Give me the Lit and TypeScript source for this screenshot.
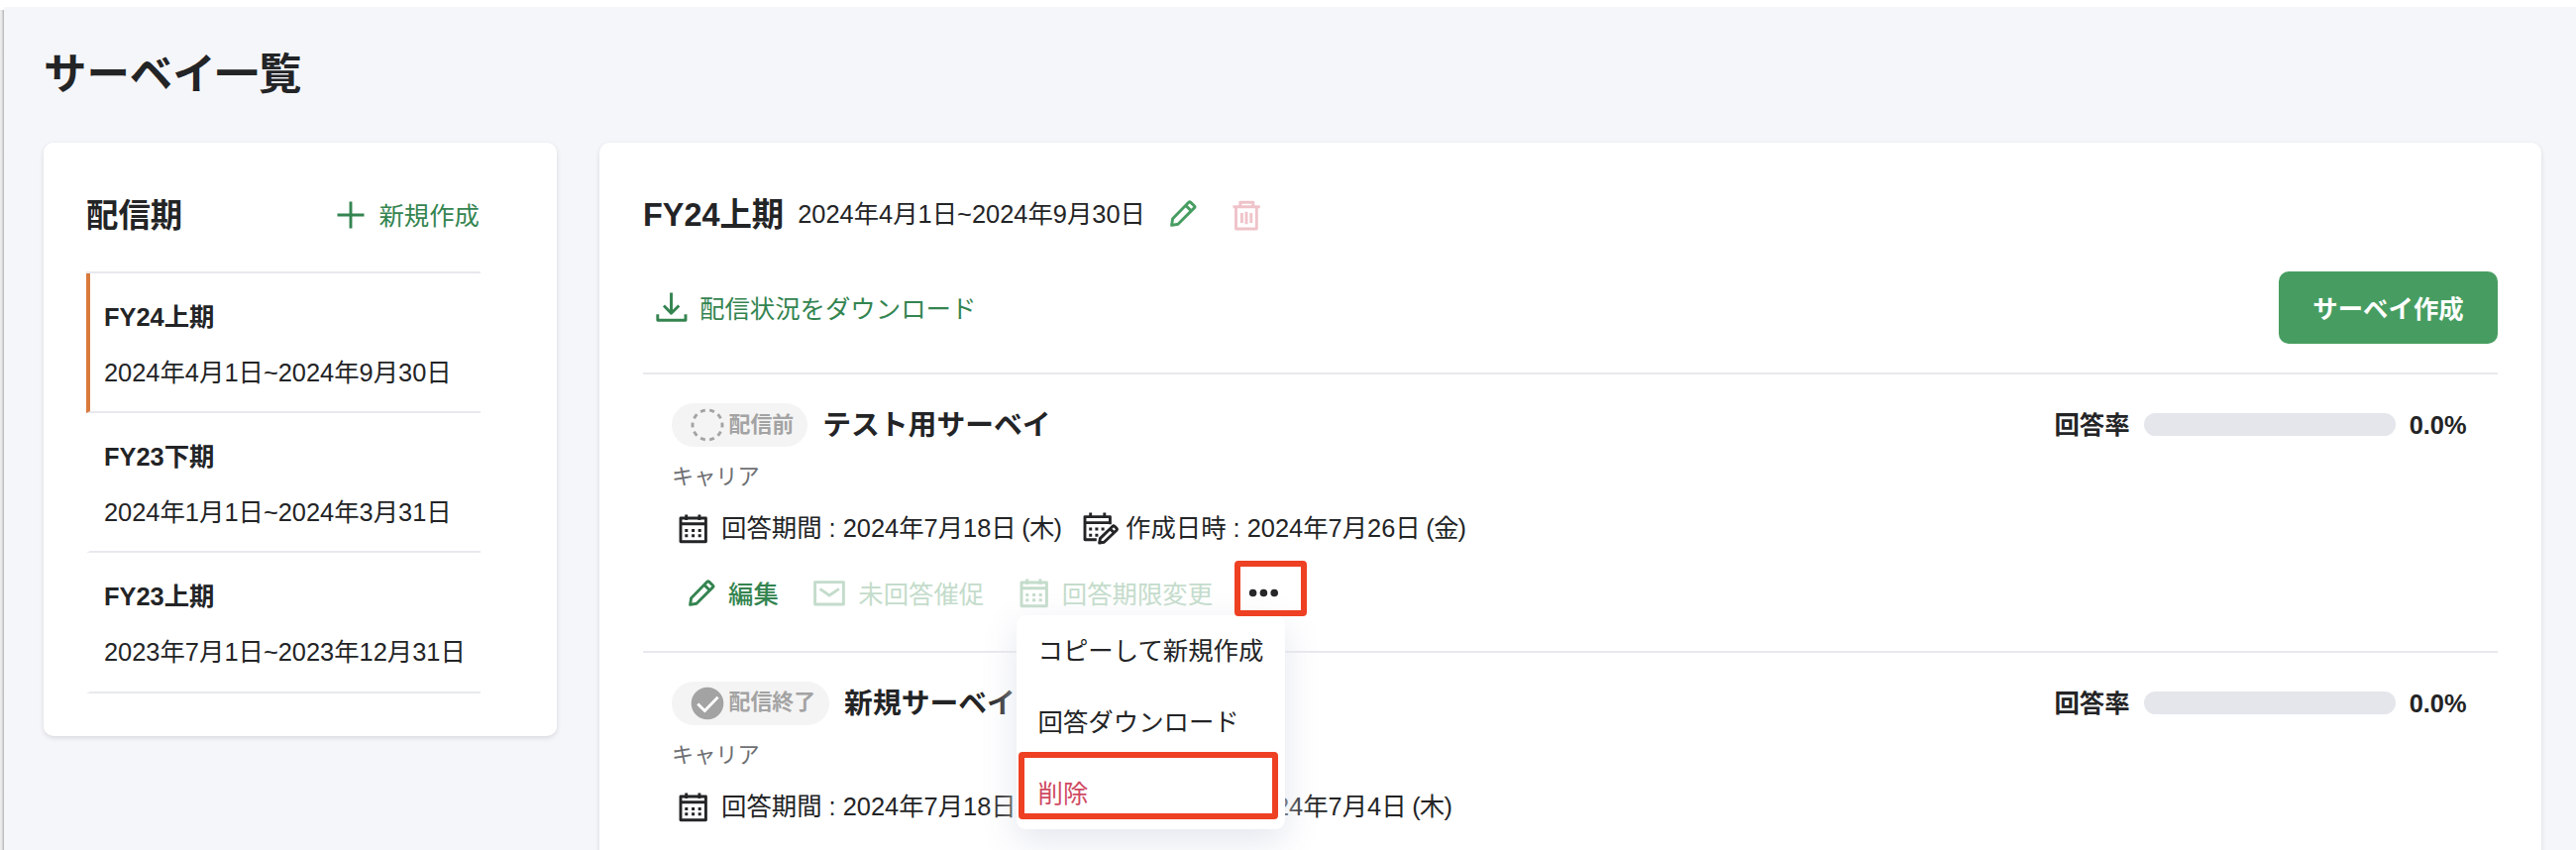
import { LitElement, html, css, svg, nothing } from "lit";
import { customElement, property } from "lit/decorators.js";

interface Period {
  name: string;
  range: string;
  active?: boolean;
}

interface Survey {
  title: string;
  status: "before" | "done";
  statusLabel: string;
  category: string;
  term: string;
  termDay: string;
  created: string;
  createdDay: string;
  rate: number;
  actions?: boolean;
}

const PERIODS: Period[] = [
  { name: "FY24上期", range: "2024年4月1日~2024年9月30日", active: true },
  { name: "FY23下期", range: "2024年1月1日~2024年3月31日" },
  { name: "FY23上期", range: "2023年7月1日~2023年12月31日" },
];

const SURVEYS: Survey[] = [
  {
    title: "テスト用サーベイ",
    status: "before",
    statusLabel: "配信前",
    category: "キャリア",
    term: "2024年7月18日",
    termDay: "(木)",
    created: "2024年7月26日",
    createdDay: "(金)",
    rate: 0,
    actions: true,
  },
  {
    title: "新規サーベイ",
    status: "done",
    statusLabel: "配信終了",
    category: "キャリア",
    term: "2024年7月18日",
    termDay: "(木)",
    created: "2024年7月4日",
    createdDay: "(木)",
    rate: 0,
  },
];

const ICONS: Record<string, { w: number; h: number; body: unknown }> = {
  plus: { w: 30, h: 30, body: svg`<path d="M15 1.5v27M1.5 15h27" />` },
  pencil: {
    w: 28,
    h: 29,
    body: svg`<path d="M2.6 26.4L3.6 19.8L20 3.1Q20.8 2.3 21.6 3.1L25.6 7Q26.4 7.8 25.6 8.6L9 25.2ZM16.8 6.4L22.2 11.8" />`,
  },
  trash: {
    w: 30,
    h: 31,
    body: svg`<path d="M1.5 6.7h27.2M8.8 6V2.2h13V6M4.5 6.7V29h20.8V6.7M10.4 13v10M15 11.7v12.6M19.8 13v10" />`,
  },
  download: {
    w: 32,
    h: 31,
    body: svg`<path d="M15.5 1.5v21M8 14.5l7.5 7.7l7.8-7.7M1.8 23.3v6h28.2v-6" />`,
  },
  calendar: {
    w: 32,
    h: 31,
    body: svg`<path d="M3 5h25.4v23.8H3ZM3 10.8h25.4M8.7 1.5v5.5M21.9 1.5v5.5" /><path class="dots" d="M7.3 15.9h3v3h-3zM14.1 15.9h3v3h-3zM20.7 15.9h3v3h-3zM7.3 21.3h3v3h-3zM14.1 21.3h3v3h-3zM20.7 21.3h3v3h-3z" />`,
  },
  calendarEdit: {
    w: 38,
    h: 35,
    body: svg`<path d="M14.8 28.8H3V5.6h25.4v7.6M3 11.6h25.4M8.7 1.6v5.5M22.8 1.6v5.5" /><path class="dots" d="M7.2 16.6h3v3h-3zM13.4 16.6h3v3h-3zM19.6 16.6h3v3h-3zM7.2 22.8h3v3h-3zM13.4 22.8h3v3h-3z" /><path d="M17.6 32L18.5 27.4L31 15.2Q32 14.3 33 15.3L35 17.3Q36 18.3 35 19.2L22.4 31.3ZM28.4 17.8L32.4 21.8" />`,
  },
  mail: {
    w: 34,
    h: 27,
    body: svg`<path d="M2.6 2.6h28.8v22.4H2.6ZM7.6 9.4l9.5 6.6l9.8-6.6" />`,
  },
  before: {
    w: 34,
    h: 34,
    body: svg`<circle cx="17" cy="17" r="15" pathLength="100" stroke-dasharray="5.2 4.8" stroke-dashoffset="2.6" />`,
  },
  done: {
    w: 34,
    h: 34,
    body: svg`<circle class="disc" cx="17" cy="17" r="16.3" /><path class="tick" d="M7.3 17.4l7 7.2L27.6 10.8" />`,
  },
  more: {
    w: 31,
    h: 9,
    body: svg`<path class="dots" d="M.8 4.5a3.8 3.8 0 1 0 7.6 0a3.8 3.8 0 1 0-7.6 0zM11.6 4.5a3.8 3.8 0 1 0 7.6 0a3.8 3.8 0 1 0-7.6 0zM22.4 4.5a3.8 3.8 0 1 0 7.6 0a3.8 3.8 0 1 0-7.6 0z" />`,
  },
};

@customElement("app-icon")
class AppIcon extends LitElement {
  @property() name = "plus";

  static styles = css`
    :host {
      display: inline-flex;
      flex: none;
    }
    svg {
      display: block;
      fill: none;
      stroke: currentColor;
      stroke-width: 2.9;
      stroke-linejoin: round;
    }
    .dots {
      fill: currentColor;
      stroke: none;
    }
    .disc {
      fill: currentColor;
      stroke: none;
    }
    .tick {
      stroke: #fff;
    }
  `;

  render() {
    const icon = ICONS[this.name];
    return html`<svg width=${icon.w} height=${icon.h} viewBox="0 0 ${icon.w} ${icon.h}">${icon.body}</svg>`;
  }
}

@customElement("period-list")
class PeriodList extends LitElement {
  static styles = css`
    :host {
      display: block;
      border-top: 2px solid #e8e9ee;
    }
    .item {
      box-sizing: border-box;
      height: 141.2px;
      padding: 23.6px 0 0 14px;
      border-bottom: 2px solid #e8e9ee;
      border-left: 4px solid transparent;
      display: flex;
      flex-direction: column;
      gap: 16px;
      line-height: 40px;
    }
    .active {
      border-left-color: #d97a3c;
    }
    .name {
      font-weight: 700;
    }
  `;

  render() {
    return PERIODS.map(
      (p) => html`<div class="item ${p.active ? "active" : ""}">
        <div class="name">${p.name}</div>
        <div>${p.range}</div>
      </div>`
    );
  }
}

@customElement("survey-row")
class SurveyRow extends LitElement {
  @property({ attribute: false }) survey!: Survey;

  static styles = css`
    :host {
      box-sizing: border-box;
      display: flex;
      flex-direction: column;
      height: 280.8px;
      padding: 29px 29px 0;
      border-bottom: 2px solid #e8e9ee;
    }
    .top,
    .pill,
    .rate,
    .info,
    .actions,
    .action {
      display: flex;
      align-items: center;
      white-space: nowrap;
    }
    .top {
      height: 44px;
    }
    .pill {
      height: 44px;
      padding: 0 14px 0 19px;
      gap: 4.5px;
      border-radius: 22px;
      background: #f4f4f4;
      color: #a3a3a3;
      font-size: 21.9px;
      font-weight: 700;
    }
    .title {
      margin: 1px 0 0 15px;
      font-size: 28.8px;
      font-weight: 700;
    }
    .rate {
      margin: 0 2.5px 0 auto;
      font-weight: 700;
    }
    .track {
      width: 254px;
      height: 23px;
      margin: 0 14px 0 14px;
      border-radius: 12px;
      background: #e5e6eb;
      overflow: hidden;
    }
    .fill {
      height: 100%;
      background: #479d61;
    }
    .category {
      margin-top: 15px;
      font-size: 22.2px;
      line-height: 32px;
      color: #6e6f73;
    }
    .info {
      height: 40px;
      margin: 15.5px 0 0 6px;
    }
    .term {
      width: 347px;
      margin: 0 17px 0 12px;
    }
    .created {
      margin-left: 6px;
    }
    .day {
      margin-left: -1.5px;
      letter-spacing: -0.8px;
    }
    .actions {
      height: 44px;
      margin: 24.5px 0 0 16px;
    }
    .action {
      gap: 12px;
      margin-right: 34.5px;
      color: #c4dccb;
    }
    .edit {
      gap: 13px;
      color: #348450;
      font-weight: 500;
    }
    .deadline {
      margin-right: 21.5px;
    }
    .action app-icon {
      margin-bottom: 3px;
    }
    .more {
      position: relative;
      box-sizing: border-box;
      display: flex;
      align-items: flex-start;
      align-self: flex-start;
      width: 73px;
      height: 56px;
      margin-top: -12.5px;
      padding: 28px 0 0 14px;
    }
    .more::after {
      content: "";
      position: absolute;
      z-index: 3;
      inset: 0;
      border: 6px solid #ee4023;
      border-radius: 4px;
    }
    .menu {
      position: absolute;
      z-index: 2;
      top: 55px;
      left: -220px;
      box-sizing: border-box;
      width: 271px;
      height: 216px;
      border-radius: 9px;
      background: #fff;
      box-shadow: 0 12px 36px rgba(226, 229, 236, 0.95);
    }
    .entry {
      padding-left: 22px;
      line-height: 72px;
    }
    .danger {
      color: #cf4a62;
    }
    .marker {
      position: absolute;
      top: 138px;
      left: 2px;
      box-sizing: border-box;
      width: 262px;
      height: 68px;
      border: 6px solid #ee4023;
      border-radius: 4px;
    }
  `;

  private renderActions() {
    return html`<div class="actions">
      <div class="action edit"><app-icon name="pencil"></app-icon><span>編集</span></div>
      <div class="action"><app-icon name="mail"></app-icon><span>未回答催促</span></div>
      <div class="action deadline"><app-icon name="calendar"></app-icon><span>回答期限変更</span></div>
      <div class="more">
        <app-icon name="more"></app-icon>
        <div class="menu">
          <div class="entry">コピーして新規作成</div>
          <div class="entry">回答ダウンロード</div>
          <div class="entry danger">削除</div>
          <div class="marker"></div>
        </div>
      </div>
    </div>`;
  }

  render() {
    const s = this.survey;
    return html`
      <div class="top">
        <div class="pill"><app-icon name=${s.status}></app-icon><span>${s.statusLabel}</span></div>
        <div class="title">${s.title}</div>
        <div class="rate">
          <span>回答率</span>
          <div class="track"><div class="fill" style="width:${s.rate}%"></div></div>
          <span>${s.rate.toFixed(1)}%</span>
        </div>
      </div>
      <div class="category">${s.category}</div>
      <div class="info">
        <app-icon name="calendar"></app-icon>
        <div class="term">回答期間 : ${s.term} <span class="day">${s.termDay}</span></div>
        <app-icon name="calendarEdit"></app-icon>
        <div class="created">作成日時 : ${s.created} <span class="day">${s.createdDay}</span></div>
      </div>
      ${s.actions ? this.renderActions() : nothing}
    `;
  }
}

@customElement("app-root")
class AppRoot extends LitElement {
  static styles = css`
    :host {
      display: flex;
      height: 858px;
      overflow: hidden;
      background: #fff;
      color: #232426;
      font-family: "Liberation Sans", "Noto Sans CJK JP", sans-serif;
      font-size: 25.4px;
      line-height: 1.5;
    }
    .edge {
      flex: none;
      width: 4px;
      margin-top: 10px;
      background: linear-gradient(90deg, #f1f1f1, #e2e2e2 50%, #b0b0b0);
    }
    .page {
      flex: 1;
      margin-top: 7px;
      padding: 37.5px 35.5px 0 40px;
      background: #f5f6f9;
    }
    .page-title {
      margin: 0 0 39.5px;
      font-size: 43.4px;
      line-height: 60px;
      font-weight: 700;
    }
    .columns {
      display: flex;
      align-items: flex-start;
      gap: 43px;
    }
    .card {
      box-sizing: border-box;
      border-radius: 10px;
      background: #fff;
      box-shadow: 0 2px 5px rgba(30, 34, 60, 0.13);
    }
    .side {
      flex: none;
      width: 518px;
      height: 599px;
      padding: 50px 77px 0 43px;
    }
    .side-head,
    .head,
    .toolbar,
    .link {
      display: flex;
      align-items: center;
      white-space: nowrap;
    }
    .side-head {
      justify-content: space-between;
      height: 48px;
      margin-bottom: 32px;
    }
    .side-head .link {
      margin-right: 1px;
    }
    .side-head app-icon {
      margin: 0 1px 2px 0;
    }
    .heading {
      margin: 0;
      font-size: 32.4px;
      font-weight: 700;
    }
    .link {
      gap: 12px;
      color: #348450;
    }
    .main {
      flex: 1;
      height: 760px;
      padding: 49px 43.5px 0 44px;
    }
    .head {
      height: 48px;
    }
    .head .range {
      margin: -1px 24px 0 14px;
    }
    .green {
      margin-top: -3px;
      color: #479d61;
    }
    .pink {
      margin-left: 35px;
      color: #efc3c9;
    }
    .toolbar {
      justify-content: space-between;
      height: 73px;
      margin-top: 33px;
      padding-bottom: 29px;
      border-bottom: 2px solid #e8e9ee;
    }
    .toolbar .link {
      margin-left: 13px;
    }
    .toolbar .link app-icon {
      margin-bottom: 2px;
    }
    .toolbar .link span {
      margin-top: 3px;
    }
    .create {
      box-sizing: border-box;
      display: flex;
      align-items: center;
      justify-content: center;
      width: 221px;
      height: 73px;
      padding-top: 3px;
      border-radius: 10px;
      background: #479d61;
      color: #fff;
      font-weight: 700;
    }
  `;

  render() {
    return html`
      <div class="edge"></div>
      <div class="page">
        <h1 class="page-title">サーベイ一覧</h1>
        <div class="columns">
          <section class="card side">
            <div class="side-head">
              <h2 class="heading">配信期</h2>
              <div class="link"><app-icon name="plus"></app-icon><span>新規作成</span></div>
            </div>
            <period-list></period-list>
          </section>
          <section class="card main">
            <div class="head">
              <h2 class="heading">FY24上期</h2>
              <span class="range">2024年4月1日~2024年9月30日</span>
              <app-icon class="green" name="pencil"></app-icon>
              <app-icon class="pink" name="trash"></app-icon>
            </div>
            <div class="toolbar">
              <div class="link"><app-icon name="download"></app-icon><span>配信状況をダウンロード</span></div>
              <div class="create">サーベイ作成</div>
            </div>
            ${SURVEYS.map((s) => html`<survey-row .survey=${s}></survey-row>`)}
          </section>
        </div>
      </div>
    `;
  }
}
